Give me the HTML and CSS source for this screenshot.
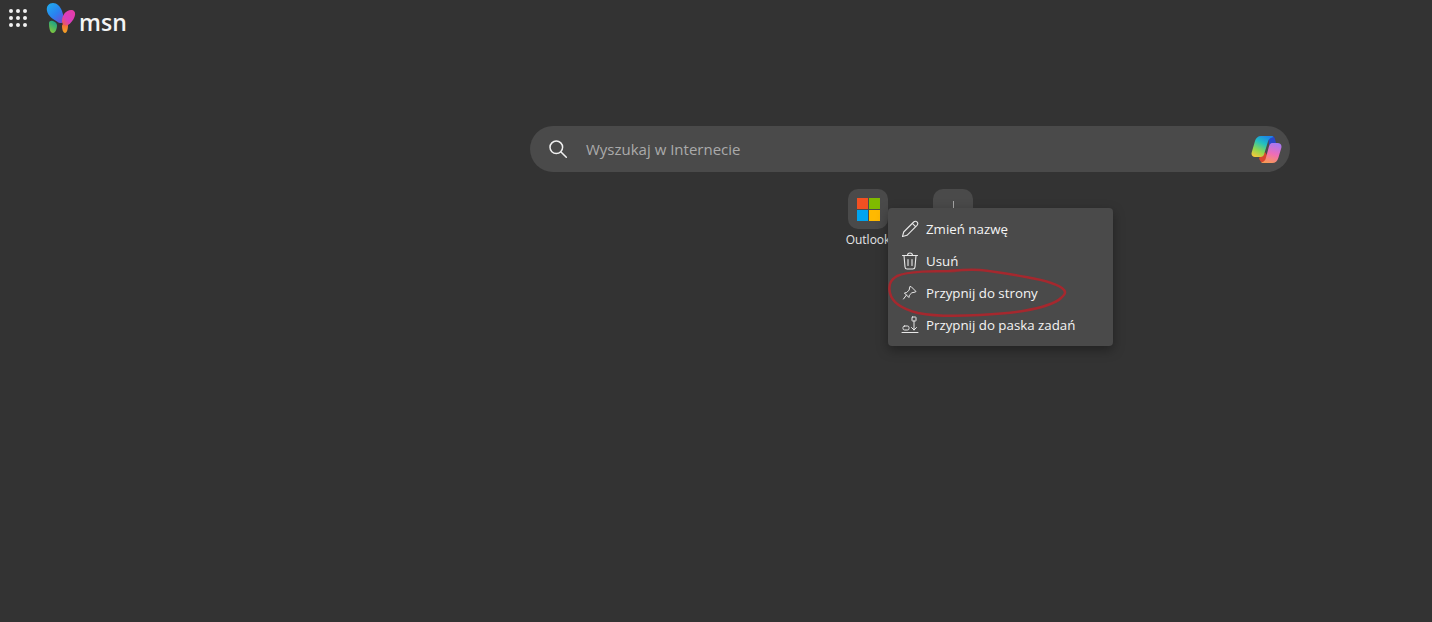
FILE: index.html
```html
<!DOCTYPE html>
<html lang="pl">
<head>
    <meta charset="UTF-8">
    <title>msn</title>
    <link rel="stylesheet" href="styles.css">
</head>
<body>
    <header class="topbar">
        <svg class="apps" width="20" height="20" viewBox="0 0 20 20" fill="#f2f2f2">
            <circle cx="3" cy="3" r="2"/><circle cx="10" cy="3" r="2"/><circle cx="17" cy="3" r="2"/>
            <circle cx="3" cy="10" r="2"/><circle cx="10" cy="10" r="2"/><circle cx="17" cy="10" r="2"/>
            <circle cx="3" cy="17" r="2"/><circle cx="10" cy="17" r="2"/><circle cx="17" cy="17" r="2"/>
        </svg>
        <div class="logo">
            <svg width="33" height="32" viewBox="0 0 33 32">
                <defs>
                    <linearGradient id="wingBlue" x1="0" y1="0" x2="0.8" y2="1">
                        <stop offset="0" stop-color="#1fb0ee"/>
                        <stop offset="0.6" stop-color="#2a80f0"/>
                        <stop offset="1" stop-color="#6a4fd8"/>
                    </linearGradient>
                    <linearGradient id="wingPink" x1="1" y1="0" x2="0" y2="1">
                        <stop offset="0" stop-color="#e83ca0"/>
                        <stop offset="0.6" stop-color="#d83ec0"/>
                        <stop offset="1" stop-color="#f2603c"/>
                    </linearGradient>
                    <linearGradient id="wingGreen" x1="0.7" y1="0" x2="0.3" y2="1">
                        <stop offset="0" stop-color="#15a08c"/>
                        <stop offset="1" stop-color="#84c83a"/>
                    </linearGradient>
                    <linearGradient id="wingOrange" x1="0.5" y1="0" x2="0.5" y2="1">
                        <stop offset="0" stop-color="#f2603c"/>
                        <stop offset="1" stop-color="#f5a623"/>
                    </linearGradient>
                </defs>
                <path d="M4 21c0-2 3-3 5-1.500 2 1 3 2 3 4 0 3-1.500 7.500-4 7.500-3 0-4-5-4-10z" fill="url(#wingGreen)"/>
                <path d="M17 24c0-2 2-3 4-3 2 0 2 1 2 2.500 0 3-1 7.500-3 7.500-2 0-3-4-3-7z" fill="url(#wingOrange)"/>
                <path d="M2 9C1 4 4 1 8 1c4 0 7 3 9 8 1.500 4 2 8 1 11-1 2-4 1-6-.5C8 17 3 14 2 9z" fill="url(#wingBlue)"/>
                <path d="M17 19c0-6 4-11 9-11 3 0 4.500 2 4 5-.7 4-4 8-7 10-3 1.500-6 0-6-4z" fill="url(#wingPink)"/>
            </svg>
            <span class="logo-text">msn</span>
        </div>
    </header>

    <main class="content">
        <div class="search">
            <svg class="search-icon" width="20" height="20" viewBox="0 0 20 20" fill="none" stroke="#f0f0f0" stroke-width="1.500" stroke-linecap="round">
                <circle cx="8.300" cy="8.300" r="6.300"/>
                <path d="M13 13l5.300 5.300"/>
            </svg>
            <span class="search-placeholder">Wyszukaj w Internecie</span>
            <svg class="copilot" width="32" height="30" viewBox="0 0 32 30">
                <defs>
                    <linearGradient id="copLeft" x1="0.7" y1="0" x2="0.2" y2="1">
                        <stop offset="0" stop-color="#1c86e8"/>
                        <stop offset="0.35" stop-color="#22c0c0"/>
                        <stop offset="0.7" stop-color="#8ed650"/>
                        <stop offset="1" stop-color="#f5c83a"/>
                    </linearGradient>
                    <linearGradient id="copRight" x1="0.6" y1="0" x2="0.3" y2="1">
                        <stop offset="0" stop-color="#a878f0"/>
                        <stop offset="0.5" stop-color="#ee6cb8"/>
                        <stop offset="1" stop-color="#f99a55"/>
                    </linearGradient>
                </defs>
                <path d="M9 24l6-6 5 8-4 2.500h-3c-2 0-3.500-2-4-4.500z" fill="#d8452e"/>
                <path d="M18 2h4c1.500 0 2.500 1 3 3l1.500 6H19z" fill="#2848c8"/>
                <path d="M11 2h10c2 0 3 1 1 1.500-2 .5-3.500 2-4 4l-4 13c-.5 1.500-1.500 2.500-3.500 2.500H5c-2.500 0-4-2-3.300-4.500L5 7c.8-3 3-5 6-5z" fill="url(#copLeft)"/>
                <path d="M22 9h5.500c3 0 4.500 2 3.800 5l-3 10c-.8 3-3 5-6 5H12c-1 0-1-.5 0-.8 2-.5 3.300-2 3.800-4l3-11.200c.4-1.700 1.500-4 3.200-4z" fill="url(#copRight)"/>
            </svg>
        </div>

        <div class="tiles">
            <div class="tile">
                <div class="tile-box">
                    <svg width="23" height="23" viewBox="0 0 23 23">
                        <rect width="11" height="11" fill="#f25022"/>
                        <rect x="12" width="11" height="11" fill="#7fba00"/>
                        <rect y="12" width="11" height="11" fill="#00a4ef"/>
                        <rect x="12" y="12" width="11" height="11" fill="#ffb900"/>
                    </svg>
                </div>
                <span class="tile-label">Outlook</span>
            </div>
            <div class="tile">
                <div class="tile-box tile-box-blank"><span class="tile-dash"></span></div>
            </div>

            <ul class="menu">
                <li class="menu-item">
                    <svg width="18" height="18" viewBox="0 0 18 18" fill="none" stroke="#e8e8e8" stroke-width="1.100" stroke-linejoin="round">
                        <path d="M1.500 16.500l1.200-4.500L12.700 2c1-1 2.400-1 3.300 0 .9 .9 .9 2.300 0 3.300L6 15.300z"/>
                        <path d="M11.300 3.400l3.300 3.300"/>
                    </svg>
                    Zmień nazwę
                </li>
                <li class="menu-item">
                    <svg width="18" height="18" viewBox="0 0 18 18" fill="none" stroke="#e8e8e8" stroke-width="1.100" stroke-linecap="round">
                        <path d="M1.500 3.500h15M6.500 3.500C6.500 2 7.500 1 9 1s2.500 1 2.500 2.500"/>
                        <path d="M3 3.500l1 11.500c.1 1.200 1 2 2.200 2h5.600c1.200 0 2.100-.8 2.200-2L15 3.500"/>
                        <path d="M7 7.500v6M11 7.500v6"/>
                    </svg>
                    Usuń
                </li>
                <li class="menu-item">
                    <svg width="18" height="18" viewBox="0 0 18 18" fill="none" stroke="#e8e8e8" stroke-width="1" stroke-linejoin="round" stroke-linecap="round">
                        <path d="M10.500 3l4.500 4.500-1 .6-3.200 .7-2.400 2.400-.5 2.300-4.500-4.500 2.300-.5 2.400-2.400 .7-3.200z"/>
                        <path d="M5.500 11L2.500 15"/>
                    </svg>
                    Przypnij do strony
                </li>
                <li class="menu-item">
                    <svg width="18" height="18" viewBox="0 0 18 18" fill="none" stroke="#e8e8e8" stroke-width="1" stroke-linecap="round" stroke-linejoin="round">
                        <rect x="11" y="1" width="4" height="4" rx="0.500"/>
                        <path d="M13 5v9M10.500 11.500L13 14l2.500-2.500"/>
                        <rect x="2" y="10" width="6" height="4" rx="1.500"/>
                        <path d="M1 16.500h16"/>
                    </svg>
                    Przypnij do paska zadań
                </li>
            </ul>

            <svg class="scribble" width="190" height="60" viewBox="0 0 190 60" fill="none" stroke="#a5282e" stroke-width="2.500" stroke-linecap="round" stroke-linejoin="round">
                <path d="M71 7C50 7 24 7 13 12 6 16 4 21 6 29c2 9 12 16 28 20 20 4 45 3 62 2 17-1 30-2 43-4 17-3 32-7 38-13 4-3 5-6 3-8-4-5-15-9-38-13C120 9 108 7 96 6 86 5 76 6 65 7"/>
            </svg>
        </div>
    </main>
</body>
</html>
```

FILE: styles.css
```css
* {
    margin: 0;
    padding: 0;
    box-sizing: border-box;
}

body {
    font-family: 'Open Sans', 'Noto Sans', sans-serif;
    background: #333333;
    color: #ffffff;
    height: 622px;
    overflow: hidden;
}

.topbar {
    display: flex;
    align-items: flex-start;
    padding: 2px 0 0 8px;
    height: 126px;
}

.apps {
    margin-top: 6px;
}

.logo {
    display: flex;
    align-items: flex-start;
    margin-left: 17px;
}

.logo-text {
    margin: 2px 0 0 1px;
    font-family: 'Open Sans', sans-serif;
    font-size: 23px;
    font-weight: 600;
    line-height: 36px;
    color: #f4f4f4;
}

.content {
    padding-left: 530px;
}

.search {
    display: flex;
    align-items: center;
    width: 760px;
    height: 46px;
    padding: 0 8px 0 18px;
    border-radius: 23px;
    background: #4a4a4a;
}

.search-placeholder {
    flex: 1;
    margin-left: 18px;
    font-size: 15px;
    color: #aaaaaa;
}

.tiles {
    position: relative;
    display: flex;
    gap: 45px;
    margin: 17px 0 0 318px;
}

.tile {
    display: flex;
    flex-direction: column;
    align-items: center;
    width: 40px;
    gap: 3px;
}

.tile-box {
    display: flex;
    align-items: center;
    justify-content: center;
    width: 40px;
    height: 40px;
    border-radius: 10px;
    background: #4a4a4a;
}

.tile-box-blank {
    align-items: flex-start;
    padding-top: 12px;
}

.tile-dash {
    width: 1px;
    height: 7px;
    background: #a5a5a5;
}

.tile-label {
    font-size: 12px;
    line-height: 16px;
    color: #e6e6e6;
}

.menu {
    position: absolute;
    top: 19px;
    left: 40px;
    width: 225px;
    height: 138px;
    padding: 5px 0;
    list-style: none;
    border-radius: 4px;
    background: #4a4a4a;
    box-shadow: 0 4px 12px rgba(0, 0, 0, 0.35);
}

.menu-item {
    display: flex;
    align-items: center;
    gap: 7px;
    height: 32px;
    padding-left: 13px;
    font-size: 13.3px;
    color: #f4f4f4;
}

.scribble {
    position: absolute;
    top: 75px;
    left: 36px;
}
```
